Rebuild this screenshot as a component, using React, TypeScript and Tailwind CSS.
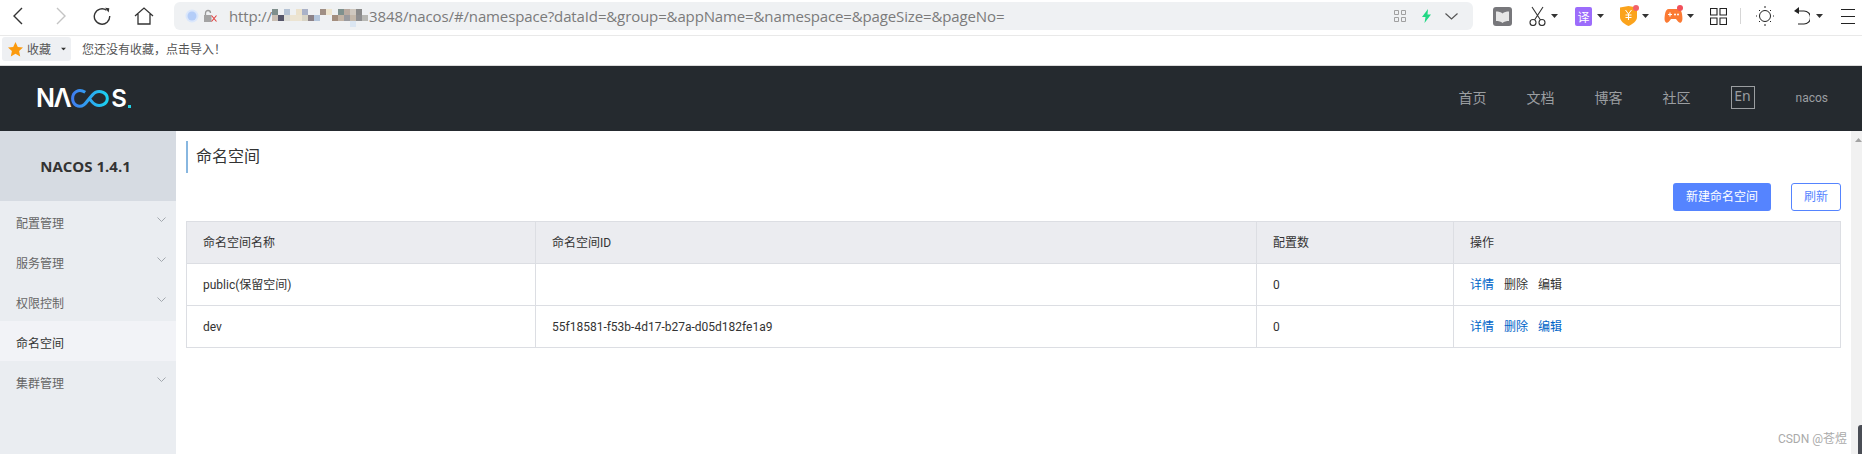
import React from 'react';

// col, row, colour of each pixelated block over the host name
const MOSAIC: [number, number, string][] = [
    [0, 0, '#7f8f8c'], [2, 0, '#b4c2d4'], [4, 0, '#ece2cc'], [5, 0, '#aab2c8'], [8, 0, '#a08f85'], [9, 0, '#efe6d0'],
    [11, 0, '#7f918e'], [12, 0, '#b9aaa0'], [13, 0, '#cfc8bf'], [14, 0, '#8a8a8a'],
    [0, 1, '#c9bfb4'], [1, 1, '#56566a'], [2, 1, '#dcdcd6'], [3, 1, '#ece4d2'], [4, 1, '#ece4d2'], [5, 1, '#d8d4c6'],
    [6, 1, '#8c8288'], [7, 1, '#b4c6dc'], [10, 1, '#a48e7e'], [11, 1, '#c2b3a4'], [12, 1, '#9a9a9e'], [13, 1, '#c4b8aa'],
    [14, 1, '#8e8e90'], [15, 1, '#b8b8b4'],
    [13, 2, '#dbe6f2'],
];

function Caret({ className = 'ml-[3px]' }: { className?: string }) {
    return (
        <svg width="7" height="4" viewBox="0 0 7 4" className={className}>
            <path d="M0 0h7L3.5 4z" fill="#333" />
        </svg>
    );
}

function Chevron() {
    return (
        <svg width="9" height="6" viewBox="0 0 9 6" fill="none" stroke="#a3a8ae" strokeWidth="1">
            <path d="M.5.5l4 4 4-4" />
        </svg>
    );
}

function BrowserBar() {
    return (
        <div className="h-[36px] shrink-0 border-b border-[#e9e9e9] bg-white flex items-start pt-[2px]">
            <div className="w-[174px] h-[28px] flex items-center shrink-0">
                <svg width="10" height="18" viewBox="0 0 10 18" fill="none" stroke="#333" strokeWidth="1.4" className="ml-[13px]">
                    <path d="M9 1L1 9l8 8" />
                </svg>
                <svg width="10" height="18" viewBox="0 0 10 18" fill="none" stroke="#c4c4c4" strokeWidth="1.4" className="ml-[33px]">
                    <path d="M1 1l8 8-8 8" />
                </svg>
                <svg width="18" height="18" viewBox="0 0 18 18" fill="none" stroke="#333" strokeWidth="1.4" className="ml-[27px]">
                    <path d="M13.5 3.2A7.7 7.7 0 1 0 16.7 9" />
                    <path d="M12 .8l4.3.5-.6 4.2z" fill="#333" stroke="none" />
                </svg>
                <svg width="20" height="18" viewBox="0 0 20 18" fill="none" stroke="#333" strokeWidth="1.3" className="ml-[23px]">
                    <path d="M1 9l9-8 9 8M4 7v10h12V7" />
                </svg>
            </div>
            <div className="w-[1299px] h-[28px] bg-[#eff1f3] rounded-md flex items-center shrink-0 relative">
                <svg width="14" height="14" viewBox="0 0 14 14" className="ml-[11px] shrink-0">
                    <circle cx="7" cy="7" r="6.5" fill="#dbe7fb" />
                    <circle cx="7" cy="7" r="4.5" fill="#b4cdf8" />
                </svg>
                <svg width="15" height="14" viewBox="0 0 15 14" className="ml-[4px] shrink-0">
                    <path d="M2.5 6V4a2.5 2.5 0 0 1 5 0" fill="none" stroke="#999" strokeWidth="1.3" />
                    <rect x="1" y="6" width="7.5" height="7" fill="#a3a3a3" />
                    <path d="M8.5 6.5l5 6M13.5 6.5l-5 6" stroke="#e2403f" strokeWidth="1.1" />
                </svg>
                <span className="ml-[11px] text-[15px] leading-none text-[#7b7b7b] font-['Open_Sans',sans-serif] whitespace-pre tracking-[-0.13px]">
                    http://<span className="inline-block w-[97px]" />3848/nacos/#/namespace?dataId=&amp;group=&amp;appName=&amp;namespace=&amp;pageSize=&amp;pageNo=
                </span>
                <svg width="96" height="18" viewBox="0 0 96 18" className="absolute left-[98px] top-[7px]" shapeRendering="crispEdges">
                    {MOSAIC.map(([col, row, fill], i) => (
                        <rect key={i} x={col * 6} y={row * 6} width="6" height="6" fill={fill} />
                    ))}
                </svg>
                <div className="ml-auto flex items-center pr-[15px]">
                    <svg width="12" height="12" viewBox="0 0 12 12" fill="none" stroke="#a0a0a0" strokeWidth="1">
                        <path d="M.5.5h4v4h-4zM7.5.5h4v4h-4zM.5 7.5h4v4h-4zM7.5 7.5h4v4h-4z" />
                    </svg>
                    <svg width="11" height="14" viewBox="0 0 11 14" className="ml-[15px]">
                        <path d="M7 0L1 8h3.5L3.5 14 10 5.500H6.500z" fill="#22d884" />
                    </svg>
                    <svg width="13" height="7" viewBox="0 0 13 7" fill="none" stroke="#555" strokeWidth="1.2" className="ml-[13px]">
                        <path d="M.5.5l6 5.500 6-5.500" />
                    </svg>
                </div>
            </div>
            <div className="h-[28px] flex items-center flex-1 pl-[20px]">
                <svg width="19" height="19" viewBox="0 0 19 19">
                    <rect width="19" height="19" rx="3" fill="#77777b" />
                    <path d="M3 4.500c2.500 0 5 .5 6.500 2 1.500-1.500 4-2 6.500-2v9.500c-2.500 0-5 .5-6.500 2-1.500-1.500-4-2-6.500-2z" fill="#e6e6e6" />
                </svg>
                <svg width="17" height="20" viewBox="0 0 17 20" fill="none" stroke="#333" strokeWidth="1.1" className="ml-[17px]">
                    <path d="M3 1l8.500 13M14 1L5.500 14" />
                    <circle cx="4" cy="16.500" r="3" />
                    <circle cx="13" cy="16.500" r="3" />
                </svg>
                <Caret className="ml-[5px]" />
                <span className="ml-[17px] w-[17px] h-[19px] rounded-[2px] bg-[#9c6cfb] text-white text-[12px] leading-[19px] text-center font-['Noto_Sans_CJK_SC',sans-serif]">译</span>
                <Caret className="ml-[5px]" />
                <span className="ml-[16px] relative flex">
                    <svg width="17" height="20" viewBox="0 0 17 20">
                        <path d="M0 1.500L8.500 0 17 1.500V11c0 4-4 7-8.500 9C4 18 0 15 0 11z" fill="#fba31c" />
                        <path d="M5.500 4l3 4 3-4M8.500 8v6M5.500 9h6M5.500 11.500h6" fill="none" stroke="#fff" strokeWidth="1" />
                    </svg>
                    <span className="absolute -right-[2px] -top-[1px] w-[6px] h-[6px] rounded-full bg-[#f2616a]" />
                </span>
                <Caret className="ml-[5px]" />
                <span className="ml-[15px] relative flex">
                    <svg width="19" height="16" viewBox="0 0 19 16">
                        <path d="M5 1h9c2.500 0 3.500 2 4 5 .5 3.500 1 7-1 8.500-1.500 1-3-1-5-3.500H7c-2 2.500-3.500 4.500-5 3.500-2-1.500-1.500-5-1-8.500C1.500 3 2.500 1 5 1z" fill="#fb7a33" />
                        <path d="M4 6.500h4M6 4.500v4" stroke="#fff" strokeWidth="1.2" />
                        <circle cx="11" cy="6.500" r="1" fill="#fff" />
                        <circle cx="14" cy="6.500" r="1" fill="#fff" />
                    </svg>
                    <span className="absolute right-0 -top-[3px] w-[6px] h-[6px] rounded-full bg-[#f2505a]" />
                </span>
                <Caret className="ml-[4px]" />
                <svg width="17" height="17" viewBox="0 0 17 17" fill="none" stroke="#222" strokeWidth="1.1" className="ml-[16px]">
                    <path d="M.5.500h6.500v6.500H.5zM10 .5h6.500v6.500H10zM.5 10H7v6.500H.5zM10 10h6.500v6.500H10z" />
                </svg>
                <span className="ml-[13px] w-px h-[16px] bg-[#d6d6d6]" />
                <svg width="18" height="20" viewBox="0 0 18 20" fill="none" stroke="#222" strokeWidth="1" className="ml-[15px]">
                    <circle cx="9" cy="10" r="5.500" />
                    <path d="M9 0v2M9 18v2M1 10h-1M18 10h-1M3 4l1 1M15 4l-1 1M3 16l1-1M15 16l-1-1" />
                </svg>
                <svg width="16" height="18" viewBox="0 0 16 18" fill="none" stroke="#222" strokeWidth="1.1" className="ml-[20px]">
                    <path d="M2 4h8a5.500 5.500 0 0 1 0 13H4" />
                    <path d="M5 0L0 4l5 3z" fill="#222" stroke="none" />
                </svg>
                <Caret className="ml-[6px]" />
                <svg width="14" height="15" viewBox="0 0 14 15" stroke="#222" strokeWidth="1" className="ml-[18px]">
                    <path d="M0 .5h14M0 7.500h14M0 14.500h14" />
                </svg>
            </div>
        </div>
    );
}

function BookmarkBar() {
    return (
        <div className="h-[29px] shrink-0 bg-white flex items-center pl-[2px] pb-[3px] text-[12px] font-['Noto_Sans_CJK_SC',sans-serif] text-[#555]">
            <div className="w-[69px] h-[24px] rounded-[3px] bg-[#eef0f3] flex items-center pl-[6px]">
                <svg width="15" height="15" viewBox="0 0 15 15">
                    <path d="M7.500 0l2.300 5 5.200.6-3.900 3.500 1.100 5.400-4.700-2.800-4.700 2.800 1.100-5.400L0 5.600 5.200 5z" fill="#fb9a0e" />
                </svg>
                <span className="ml-[4px]">收藏</span>
                <Caret className="ml-[9px] scale-75" />
            </div>
            <span className="ml-[11px]">您还没有收藏，点击导入！</span>
        </div>
    );
}

function TopNav() {
    return (
        <div className="h-[66px] shrink-0 bg-[#252a2f] border-t border-[#dcdcdc] flex items-center text-[#9b9ea1] font-['Noto_Sans_CJK_SC',sans-serif]">
            <div className="ml-[36px] flex items-center h-[20px] text-white leading-none">
                <span className="font-['Inter',sans-serif] font-semibold text-[25px] tracking-[-1.5px]">NΛ</span>
                <svg width="38" height="19" viewBox="0 0 40 20" fill="none" strokeWidth="3.200" className="ml-[1px]">
                    <defs>
                        <linearGradient id="nacosInf" x1="0" x2="1" y1="0" y2="0">
                            <stop offset="0" stopColor="#3f7df0" />
                            <stop offset="1" stopColor="#1bd1f0" />
                        </linearGradient>
                    </defs>
                    <path d="M15 3.500C8 -1 1.700 3.500 1.700 10s6.300 10.500 12 6.500c3-2 8-11 12-13 5-2.500 12.500 .5 12.500 6.500s-7.500 9-12.500 6.500c-2.500-1.200-4-3.500-6-6" stroke="url(#nacosInf)" />
                </svg>
                <span className="ml-[2px] font-['Inter',sans-serif] font-semibold text-[24px]">S</span>
                <span className="ml-[1px] mt-[16px] w-[3px] h-[3px] bg-[#1fd3e8]" />
            </div>
            <div className="ml-auto flex items-center text-[14px] pb-[2px]">
                <span>首页</span>
                <span className="ml-[40px]">文档</span>
                <span className="ml-[40px]">博客</span>
                <span className="ml-[40px]">社区</span>
                <span className="ml-[40px] w-[24px] h-[23px] border border-[#9b9ea1] text-center leading-[18px] font-['Noto_Sans',sans-serif]">En</span>
                <span className="ml-[41px] mr-[34px] text-[12px] font-['Roboto',sans-serif]">nacos</span>
            </div>
        </div>
    );
}

const MENU = [
    { label: '配置管理', more: true },
    { label: '服务管理', more: true },
    { label: '权限控制', more: true },
    { label: '命名空间', more: false, active: true },
    { label: '集群管理', more: true },
];

function Sidebar() {
    return (
        <div className="w-[176px] shrink-0 bg-[#eaedf1]">
            <div className="h-[70px] bg-[#d6dbe2] flex items-center justify-center pr-[5px] text-[15px] font-bold text-[#333] font-['Open_Sans',sans-serif]">
                NACOS 1.4.1
            </div>
            {MENU.map((m) => (
                <div
                    key={m.label}
                    className={`h-[40px] flex items-center justify-between pl-[16px] pr-[10px] text-[12px] pt-[6px] ${m.active ? 'bg-[#f2f3f7] text-[#333]' : 'text-[#666]'}`}
                >
                    <span>{m.label}</span>
                    {m.more && <span className="-mt-[9px] flex"><Chevron /></span>}
                </div>
            ))}
        </div>
    );
}

const ROWS = [
    { name: 'public(保留空间)', id: '', count: 0, locked: true },
    { name: 'dev', id: '55f18581-f53b-4d17-b27a-d05d182fe1a9', count: 0, locked: false },
];

function Actions({ locked }: { locked: boolean }) {
    const other = locked ? 'text-[#333]' : 'text-[#0064c8]';
    return (
        <div className="flex gap-[10px]">
            <span className="text-[#0064c8]">详情</span>
            <span className={other}>删除</span>
            <span className={other}>编辑</span>
        </div>
    );
}

function NamespaceTable() {
    const cell = 'border border-[#dcdee3] px-[16px] font-normal text-left';
    return (
        <table className="mt-[10px] w-full table-fixed border-collapse text-[12px] text-[#333]">
            <colgroup>
                <col className="w-[349px]" />
                <col className="w-[721px]" />
                <col className="w-[197px]" />
                <col />
            </colgroup>
            <thead>
                <tr className="h-[42px] bg-[#ebecf0]">
                    <th className={cell}>命名空间名称</th>
                    <th className={cell}>命名空间ID</th>
                    <th className={cell}>配置数</th>
                    <th className={cell}>操作</th>
                </tr>
            </thead>
            <tbody>
                {ROWS.map((r) => (
                    <tr key={r.name} className="h-[42px]">
                        <td className={cell}>{r.name}</td>
                        <td className={cell}>{r.id}</td>
                        <td className={cell}>{r.count}</td>
                        <td className={cell}><Actions locked={r.locked} /></td>
                    </tr>
                ))}
            </tbody>
        </table>
    );
}

export default function App() {
    return (
        <div className="relative h-[454px] w-[1862px] overflow-hidden flex flex-col bg-white font-['Roboto','Noto_Sans_CJK_SC',sans-serif]">
            <BrowserBar />
            <BookmarkBar />
            <TopNav />
            <div className="flex-1 flex min-h-0">
                <Sidebar />
                <div className="flex-1 px-[10px] pt-[10px]">
                    <div className="h-[32px] border-l-2 border-[#88b7e0] pl-[8px] flex items-center text-[16px] text-[#333]">命名空间</div>
                    <div className="mt-[10px] flex justify-end gap-[20px] text-[12px]">
                        <button className="h-[28px] w-[98px] rounded-[3px] bg-[#5584ff] text-white">新建命名空间</button>
                        <button className="h-[28px] w-[50px] rounded-[3px] border border-[#5584ff] text-[#5584ff] bg-white">刷新</button>
                    </div>
                    <NamespaceTable />
                </div>
                <div className="w-[11px] shrink-0 bg-[#f1f1f1] flex justify-center pt-[7px]">
                    <svg width="7" height="4" viewBox="0 0 7 4" className="ml-[4px]"><path d="M3.500 0L7 4H0z" fill="#a3a3a3" /></svg>
                </div>
            </div>
            <div className="absolute right-[15px] bottom-[7px] text-[12px] leading-[16px] text-[#aaa]">CSDN @苍煜</div>
            <div className="absolute right-0 bottom-0 w-[4px] h-[29px] rounded-tl-[3px] bg-[#4a4d55]" />
        </div>
    );
}
